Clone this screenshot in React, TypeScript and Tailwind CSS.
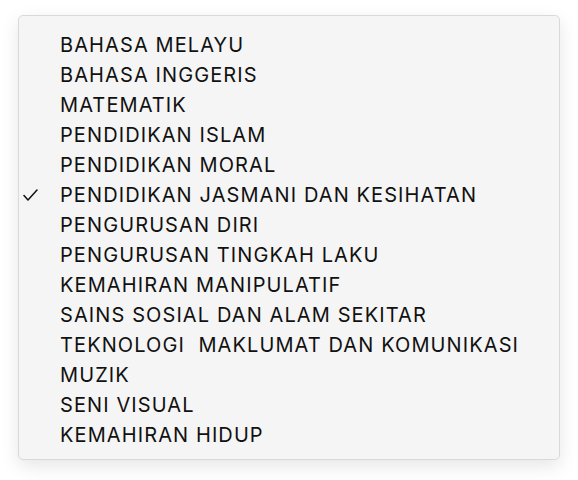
import React from "react";

const items = [
  "BAHASA MELAYU",
  "BAHASA INGGERIS",
  "MATEMATIK",
  "PENDIDIKAN ISLAM",
  "PENDIDIKAN MORAL",
  "PENDIDIKAN JASMANI DAN KESIHATAN",
  "PENGURUSAN DIRI",
  "PENGURUSAN TINGKAH LAKU",
  "KEMAHIRAN MANIPULATIF",
  "SAINS SOSIAL DAN ALAM SEKITAR",
  "TEKNOLOGI  MAKLUMAT DAN KOMUNIKASI",
  "MUZIK",
  "SENI VISUAL",
  "KEMAHIRAN HIDUP",
];

const selected = 5;

function Check() {
  return (
    <svg width="15" height="12" viewBox="0 0 15 12" fill="none">
      <path d="M1 6.5 L5 11 L14 1" stroke="#111" strokeWidth="1.5" strokeLinecap="round" strokeLinejoin="round" />
    </svg>
  );
}

export default function App() {
  return (
    <div className="w-[578px] h-[480px] bg-white pt-[15px] pl-[18px]">
      <div
        className="w-[542px] h-[445px] bg-[#f5f5f5] rounded-[5px] border border-[#d9d9d9] shadow-[0_6px_18px_rgba(0,0,0,0.10)] pt-[14px] flex flex-col"
        style={{ fontFamily: "Inter, 'Noto Sans', sans-serif" }}
      >
        {items.map((label, i) => (
          <div key={i} className="h-[30px] flex items-center text-[20px] tracking-[1.1px] text-[#111] whitespace-pre">
            <div className="w-[41px] pl-[4px] flex items-center">{i === selected && <Check />}</div>
            <span>{label}</span>
          </div>
        ))}
      </div>
    </div>
  );
}
